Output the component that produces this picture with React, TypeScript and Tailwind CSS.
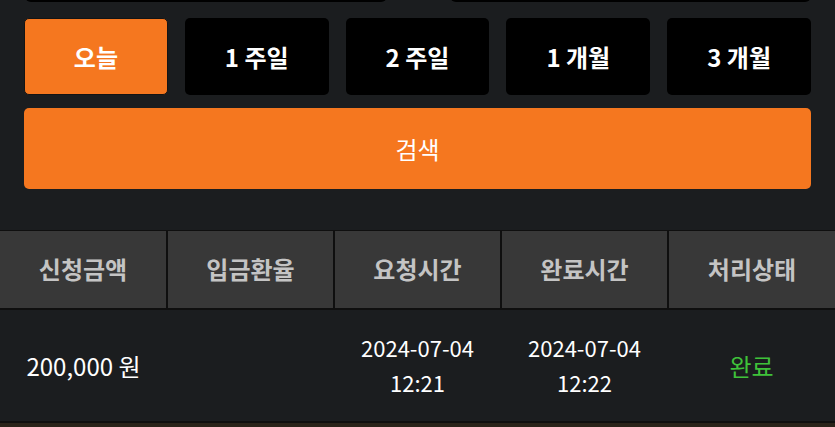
const periods = ["오늘", "1 주일", "2 주일", "1 개월", "3 개월"];
const columns = ["신청금액", "입금환율", "요청시간", "완료시간", "처리상태"];

export default function App() {
  return (
    <div
      className="w-full h-[427px] overflow-hidden bg-[#1b1d1f] text-white"
      style={{ fontFamily: '"Noto Sans CJK KR", "Noto Sans", sans-serif' }}
    >
      {/* Search form */}
      <div className="px-6">
        {/* date inputs (scrolled off the top) */}
        <div className="flex items-center gap-[63px] mt-[-38px] pl-px">
          <div className="h-10 flex-1 rounded-md bg-black" />
          <div className="h-10 flex-1 rounded-md bg-black" />
        </div>

        {/* period buttons */}
        <div className="mt-4 grid grid-cols-5 gap-[17px]">
          {periods.map((p, i) => (
            <button
              key={p}
              className={
                i === 0
                  ? "h-[77px] rounded-[5px] border border-[#141414] bg-[#f5771f] text-[24px] font-bold"
                  : "h-[77px] rounded-[5px] bg-black text-[24px] font-bold"
              }
            >
              {p}
            </button>
          ))}
        </div>

        <button className="mt-[13px] w-full h-[81px] rounded-[5px] bg-[#f5771f] text-[24px]">
          검색
        </button>
      </div>

      {/* History table */}
      <table className="mt-[41px] w-full table-fixed border-collapse">
        <thead>
          <tr className="bg-[#383838] border-t border-b-2 border-[#0f0f0f]">
            {columns.map((c, i) => (
              <th
                key={c}
                className={
                  i === 0
                    ? "h-[78px] text-[24px] font-bold text-[#c4c4c4]"
                    : "h-[78px] text-[24px] font-bold text-[#c4c4c4] border-l-2 border-[#0f0f0f]"
                }
              >
                {c}
              </th>
            ))}
          </tr>
        </thead>
        <tbody>
          <tr className="border-b-2 border-[#0f0f0f] text-[22px] leading-[35px] text-center">
            <td className="h-[113px] text-[24px]">200,000 원</td>
            <td></td>
            <td>
              2024-07-04
              <br />
              12:21
            </td>
            <td>
              2024-07-04
              <br />
              12:22
            </td>
            <td className="text-[24px] text-[#3fc23a]">완료</td>
          </tr>
        </tbody>
      </table>
      <div className="h-6 bg-[#2a2319]" />
    </div>
  );
}
